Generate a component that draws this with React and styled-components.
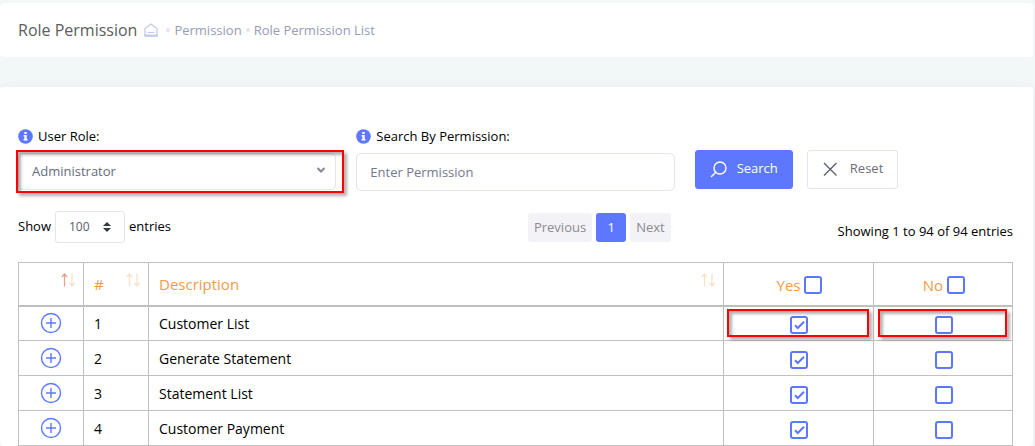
import React, { useState } from "react";
import styled, { createGlobalStyle } from "styled-components";

const GlobalStyle = createGlobalStyle`
  * { box-sizing: border-box; }
  body {
    margin: 0;
    background: #f2f7f8;
    color: #000;
    font: 13px/20px "Open Sans", "Noto Sans", sans-serif;
  }
  button, input, select { font: inherit; margin: 0; }
`;

const Page = styled.div`
  display: flex;
  flex-direction: column;
  gap: 30px;
  padding: 3px 2px 0 0;
`;

const Header = styled.header`
  display: flex;
  align-items: center;
  min-height: 54px;
  padding: 0 18px;
  background: #fff;
  border-radius: 4px;
`;

const Title = styled.h1`
  margin: 0 7px 0 0;
  font-size: 16px;
  line-height: 24px;
  font-weight: 400;
  color: #5c5c5c;
`;

const Crumbs = styled.nav`
  display: flex;
  align-items: center;
  gap: 4px;
`;

const CrumbLink = styled.a`
  display: flex;
  color: #959cb6;
  text-decoration: none;
`;

const HomeLink = styled(CrumbLink)`
  margin-right: 4px;
`;

const Dot = styled.span`
  width: 4px;
  height: 4px;
  border-radius: 50%;
  background: #e4e3ee;
`;

const Card = styled.main`
  padding: 38px 20px 0 18px;
  background: #fff;
  border-radius: 4px;
  box-shadow: 0 0 13px rgba(82, 63, 105, 0.05);
`;

const Columns = styled.div`
  display: grid;
  grid-template-columns: repeat(3, 1fr);
  column-gap: 20px;
`;

const Field = styled.div`
  display: flex;
  flex-direction: column;
  gap: 6px;
`;

const Label = styled.label`
  display: flex;
  align-items: center;
  gap: 5px;
  line-height: 22px;
`;

const Control = styled.div`
  position: relative;
  display: flex;
`;

const controlText = `
  width: 100%;
  padding: 0 13px;
  border: 1px solid #e2e5ec;
  border-radius: 5px;
  background: #fff;
  outline: none;
`;

const Select = styled.select`
  ${controlText}
  height: 37px;
  padding-bottom: 1px;
  appearance: none;
  color: #646c7c;
`;

const TextInput = styled.input`
  ${controlText}
  height: 38px;
  color: #495057;
  &::placeholder { color: #74788d; opacity: 1; }
`;

const Chevron = styled.svg`
  position: absolute;
  right: 10px;
  top: 13px;
  pointer-events: none;
`;

const Highlight = styled.span`
  position: absolute;
  inset: ${(p) => p.$inset};
  border: 2px solid #f00;
  box-shadow: 3px 3px 3px rgba(0, 0, 0, 0.3), inset 3px 3px 3px rgba(0, 0, 0, 0.3);
  pointer-events: none;
`;

const Actions = styled.div`
  display: flex;
  gap: 14px;
  padding-top: 25px;
`;

const Button = styled.button`
  display: flex;
  align-items: center;
  height: 39px;
  padding: 0 14px 3px;
  gap: ${(p) => (p.$primary ? "10px" : "12px")};
  border: 1px solid ${(p) => (p.$primary ? "#5d78ff" : "#e2e5ec")};
  border-radius: 3px;
  background: ${(p) => (p.$primary ? "#5d78ff" : "#fff")};
  color: ${(p) => (p.$primary ? "#fff" : "#6c6e7a")};
  cursor: pointer;

  svg { margin-top: 2px; }
`;

const ListBar = styled(Columns)`
  align-items: center;
  margin-top: 20px;
`;

const Length = styled.label`
  display: flex;
  align-items: center;
  gap: 4px;
  line-height: 18px;
`;

const LengthText = styled.span`
  padding-bottom: 2px;
`;

const LengthControl = styled.span`
  position: relative;
  display: flex;
`;

const LengthSelect = styled.select`
  appearance: none;
  width: 70px;
  height: 32px;
  padding: 0 13px;
  border: 1px solid #e2e5ec;
  border-radius: 3px;
  background: #fff;
  color: #595d6e;
  font-size: 12px;
`;

const Sorter = styled.svg`
  position: absolute;
  right: 14px;
  top: 11px;
  pointer-events: none;
`;

const Pager = styled.nav`
  display: flex;
  justify-content: flex-end;
  gap: 4px;
  padding-right: 4px;
`;

const PageButton = styled.button`
  min-width: 30px;
  height: 29px;
  padding: 0 6px;
  border: 0;
  border-radius: 3px;
  background: ${(p) => (p.$active ? "#5d78ff" : "#f3f2f7")};
  color: ${(p) => (p.$active ? "#fff" : "#8b8b8f")};
`;

const Info = styled.div`
  padding-top: 8px;
  text-align: right;
`;

const Table = styled.table`
  width: 100%;
  margin-top: 19px;
  border-collapse: collapse;
  table-layout: fixed;
  font-size: 14px;
`;

const Col = styled.col`
  width: ${(p) => p.$width};
`;

const Th = styled.th`
  position: relative;
  height: 43px;
  padding: 0 10px;
  border: 1px solid #c0c0c0;
  border-bottom-width: 2px;
  color: #f19b45;
  font-size: 15px;
  font-weight: 400;
  text-align: left;
`;

const Td = styled.td`
  position: relative;
  height: 35px;
  padding: ${(p) => (p.$center ? "0 10px" : "2px 10px 0")};
  border: 1px solid #c0c0c0;
  text-align: ${(p) => (p.$center ? "center" : "left")};
`;

const SortMark = styled.svg`
  position: absolute;
  right: 7px;
  top: 10px;
`;

const CheckLabel = styled.label`
  display: flex;
  align-items: center;
  justify-content: center;
  gap: 4px;
  padding: 2px 0 0 2px;
`;

const CheckBox = styled.span`
  position: relative;
  display: flex;
`;

const CheckInput = styled.input`
  appearance: none;
  width: 18px;
  height: 18px;
  border: 2px solid #5d78ff;
  border-radius: 3px;
  background: #fff;
`;

const CheckMark = styled.svg`
  position: absolute;
  inset: 0;
  pointer-events: none;
`;

const CellCheck = styled(CheckLabel)`
  padding: 3px 0 0 1px;
`;

const ExpandButton = styled.button`
  display: flex;
  margin: 0 auto;
  padding: 0;
  border: 0;
  background: none;
  cursor: pointer;
`;

function InfoIcon() {
  return (
    <svg width="15" height="15" viewBox="0 0 15 15" aria-hidden="true">
      <circle cx="7.5" cy="7.5" r="7.3" fill="#5d78ff" />
      <path d="M6.3 3h2.4v2H6.3zM5.6 6h3.1v4h.8v1.4H5.6V10h.8V7.4h-.8z" fill="#fff" />
    </svg>
  );
}

function HomeIcon() {
  return (
    <svg width="14" height="14" viewBox="0 0 14 14" fill="none" stroke="#c5cbea" aria-hidden="true">
      <path d="M1 13V5.5L7 1l6 4.500V13z" strokeWidth="1.300" />
      <path d="M0.500 12.500h13" strokeWidth="2" />
      <path d="M3.500 9.500h7" />
    </svg>
  );
}

function SortArrows({ ascending }) {
  return (
    <SortMark width="15" height="14" viewBox="0 0 15 14" fill="none" aria-hidden="true">
      <path d="M3.500 13.500V1M0.800 4l2.700-3 2.700 3" stroke={ascending ? "#e8a08c" : "#fbe1c9"} strokeWidth="1.300" />
      <path d="M11 0.500V13M8.300 10l2.700 3 2.700-3" stroke="#fbe1c9" strokeWidth="1.300" />
    </SortMark>
  );
}

function Check({ label, text, checked: initial, header }) {
  const [checked, setChecked] = useState(Boolean(initial));
  const Wrap = header ? CheckLabel : CellCheck;
  return (
    <Wrap>
      {text}
      <CheckBox>
        <CheckInput
          type="checkbox"
          aria-label={label}
          checked={checked}
          onChange={(e) => setChecked(e.target.checked)}
        />
        {checked && (
          <CheckMark width="18" height="18" viewBox="0 0 18 18" fill="none" aria-hidden="true">
            <path d="M5 9.200l2.800 2.800L14 5.800" stroke="#5d78ff" strokeWidth="2" />
          </CheckMark>
        )}
      </CheckBox>
    </Wrap>
  );
}

const permissions = ["Customer List", "Generate Statement", "Statement List", "Customer Payment"];

export default function App() {
  return (
    <>
      <GlobalStyle />
      <Page>
        <Header>
          <Title>Role Permission</Title>
          <Crumbs aria-label="Breadcrumb">
            <HomeLink href="#home" aria-label="Home"><HomeIcon /></HomeLink>
            <Dot />
            <CrumbLink href="#permission">Permission</CrumbLink>
            <Dot />
            <CrumbLink href="#list">Role Permission List</CrumbLink>
          </Crumbs>
        </Header>
        <Card>
          <Columns>
            <Field>
              <Label htmlFor="role"><InfoIcon />User Role:</Label>
              <Control>
                <Select id="role" defaultValue="Administrator">
                  <option>Administrator</option>
                </Select>
                <Chevron width="10" height="8" viewBox="0 0 10 8" fill="none" aria-hidden="true">
                  <path d="M1.500 2l3.500 3.500L8.500 2" stroke="#84869a" strokeWidth="2" />
                </Chevron>
                <Highlight $inset="-3px -8px -3px -2px" />
              </Control>
            </Field>
            <Field>
              <Label htmlFor="permission"><InfoIcon />Search By Permission:</Label>
              <Control>
                <TextInput id="permission" type="text" placeholder="Enter Permission" />
              </Control>
            </Field>
            <Actions>
              <Button type="button" $primary>
                <svg width="17" height="17" viewBox="0 0 17 17" fill="none" stroke="#fff" strokeWidth="1.400" aria-hidden="true">
                  <circle cx="10" cy="7" r="6" />
                  <path d="M5.800 11.200L1 16" />
                </svg>
                Search
              </Button>
              <Button type="button">
                <svg width="16" height="16" viewBox="0 0 16 16" fill="none" stroke="#595d6e" strokeWidth="1.300" aria-hidden="true">
                  <path d="M2 2l12.500 12.500M14.500 2L2 14.500" />
                </svg>
                Reset
              </Button>
            </Actions>
          </Columns>
          <ListBar>
            <Length>
              <LengthText>Show</LengthText>
              <LengthControl>
                <LengthSelect defaultValue="100">
                  <option>100</option>
                </LengthSelect>
                <Sorter width="8" height="10" viewBox="0 0 8 10" fill="#343a40" aria-hidden="true">
                  <path d="M0 4l4-4 4 4zM0 6h8l-4 4z" />
                </Sorter>
              </LengthControl>
              <LengthText>entries</LengthText>
            </Length>
            <Pager aria-label="Pages">
              <PageButton type="button">Previous</PageButton>
              <PageButton type="button" $active>1</PageButton>
              <PageButton type="button">Next</PageButton>
            </Pager>
            <Info>Showing 1 to 94 of 94 entries</Info>
          </ListBar>
          <Table>
            <colgroup>
              <Col $width="65px" />
              <Col $width="65px" />
              <Col $width="auto" />
              <Col $width="150px" />
              <Col $width="139px" />
            </colgroup>
            <thead>
              <tr>
                <Th><SortArrows ascending /></Th>
                <Th>#<SortArrows /></Th>
                <Th>Description<SortArrows /></Th>
                <Th><Check header text="Yes" label="Yes to all" /></Th>
                <Th><Check header text="No" label="No to all" /></Th>
              </tr>
            </thead>
            <tbody>
              {permissions.map((name, i) => (
                <tr key={name}>
                  <Td $center>
                    <ExpandButton type="button" aria-label={`Expand ${name}`}>
                      <svg width="22" height="22" viewBox="0 0 22 22" fill="none" stroke="#5d78ff" strokeWidth="1.400" aria-hidden="true">
                        <circle cx="11" cy="11" r="9.500" />
                        <path d="M6 11h10M11 6v10" />
                      </svg>
                    </ExpandButton>
                  </Td>
                  <Td>{i + 1}</Td>
                  <Td>{name}</Td>
                  <Td $center>
                    <Check checked label={`Yes: ${name}`} />
                    {i === 0 && <Highlight $inset="2px 4px 3px 3px" />}
                  </Td>
                  <Td $center>
                    <Check label={`No: ${name}`} />
                    {i === 0 && <Highlight $inset="2px 5px 3px 4px" />}
                  </Td>
                </tr>
              ))}
            </tbody>
          </Table>
        </Card>
      </Page>
    </>
  );
}
